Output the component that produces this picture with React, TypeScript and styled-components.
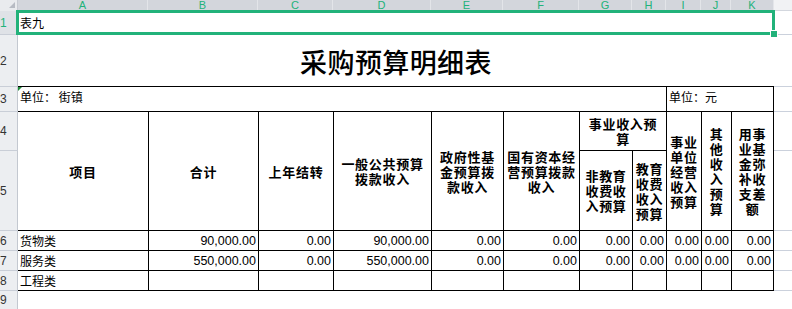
import React from "react";
import styled, { createGlobalStyle } from "styled-components";

const GREEN = "#22b27a";
const CJK = `"Noto Sans CJK SC", "Noto Sans", sans-serif`;
const LATIN = `"Liberation Sans", Arial, sans-serif`;

const GlobalStyle = createGlobalStyle`
  html, body { margin: 0; padding: 0; background: #fff; }
  body { font-family: ${CJK}; color: #000; }
`;

const Sheet = styled.div`
  position: relative;
  width: 792px;
  height: 309px;
  overflow: hidden;
  background: #fff;
  display: grid;
  grid-template-columns: 18px 130px 110px 75px 98px 72px 76px 53px 34px 35px 30px 43px 1fr;
  grid-template-rows: 11px 23px 52px 25px 39px 80px 20px 20px 20px 1fr;
`;

const Corner = styled.div`
  grid-column: 1;
  grid-row: 1;
  background: #e9ebee;
  border-right: 1px solid #c6cad1;
  box-sizing: border-box;
  display: flex;
  align-items: flex-end;
  justify-content: flex-end;
  padding: 0 2px 3px 0;
`;

const CornerMark = styled.span`
  width: 0;
  height: 0;
  border-left: 6px solid transparent;
  border-bottom: 6px solid #b7bbc3;
`;

const ColHeader = styled.div<{ $col: number }>`
  grid-column: ${(p) => p.$col};
  grid-row: 1;
  background: #d3d6dc;
  border-right: 1px solid #e3e5e9;
  box-sizing: border-box;
  display: flex;
  justify-content: center;
  align-items: flex-start;
  font-family: ${LATIN};
  font-size: 11px;
  line-height: 10px;
  color: ${GREEN};
`;

const ColHeaderRest = styled.div`
  grid-column: 13;
  grid-row: 1;
  background: #f1f2f4;
  border-bottom: 1px solid #d3d7de;
  box-sizing: border-box;
`;

const RowHeader = styled.div<{ $row: number; $sel?: boolean }>`
  grid-column: 1;
  grid-row: ${(p) => p.$row};
  background: ${(p) => (p.$sel ? "#dfe2e7" : "#eceef1")};
  border-right: 1px solid #c3c8d0;
  border-top: ${(p) => (p.$sel ? "none" : "1px solid #c9ced7")};
  box-sizing: border-box;
  overflow: hidden;
  display: flex;
  align-items: center;
  font-family: ${LATIN};
  font-size: 12px;
  color: ${(p) => (p.$sel ? GREEN : "#333")};
`;

const GridRest = styled.div<{ $row: number; $first?: boolean }>`
  grid-column: 13;
  grid-row: ${(p) => p.$row};
  border-top: ${(p) => (p.$first ? "none" : "1px solid #cbd1dc")};
  box-sizing: border-box;
`;

const Note = styled.div`
  grid-column: 2 / 13;
  grid-row: 2;
  display: flex;
  align-items: center;
  padding-left: 2px;
  font-size: 12px;
`;

const Title = styled.div`
  grid-column: 2 / 13;
  grid-row: 3;
  display: flex;
  align-items: center;
  justify-content: center;
  padding-top: 3px;
  box-sizing: border-box;
  font-size: 27px;
  font-weight: 500;
  letter-spacing: 0.4px;
`;

type CellProps = {
  $col: string;
  $row: string;
  $l?: boolean;
  $r?: boolean;
};

const TableCell = styled.div<CellProps>`
  grid-column: ${(p) => p.$col};
  grid-row: ${(p) => p.$row};
  box-sizing: border-box;
  border-top: 1px solid #000;
  border-left: ${(p) => (p.$l ? "1px solid #000" : "none")};
  border-right: ${(p) => (p.$r ? "1px solid #000" : "none")};
  min-width: 0;
  overflow: hidden;
  display: flex;
`;

const UnitCell = styled(TableCell)<{ $mark?: boolean }>`
  position: relative;
  align-items: flex-start;
  padding: 2px 0 0 2px;
  font-size: 12px;
  line-height: 16px;
  white-space: pre;
  &::before {
    content: "";
    display: ${(p) => (p.$mark ? "block" : "none")};
    position: absolute;
    top: 0;
    left: 0;
    border-top: 4px solid #1e8c3a;
    border-right: 4px solid transparent;
  }
`;

const HeadCell = styled(TableCell)`
  align-items: center;
  justify-content: center;
  text-align: center;
  white-space: pre;
  font-size: 13px;
  font-weight: 700;
  line-height: 15px;
  letter-spacing: 0.7px;
`;

const LabelCell = styled(TableCell)`
  align-items: center;
  padding-left: 2px;
  font-size: 12px;
`;

const NumCell = styled(TableCell)`
  align-items: center;
  justify-content: flex-end;
  padding-right: 2px;
  font-family: ${LATIN};
  font-size: 12.5px;
`;

const TableEnd = styled.div`
  grid-column: 2 / 13;
  grid-row: 10;
  border-top: 1px solid #000;
`;

const Selection = styled.div`
  position: absolute;
  left: 16px;
  top: 10px;
  width: 759px;
  height: 25px;
  box-sizing: border-box;
  border: 3px solid ${GREEN};
  pointer-events: none;
  &::after {
    content: "";
    position: absolute;
    right: -5px;
    bottom: -5px;
    width: 6px;
    height: 6px;
    background: ${GREEN};
    box-shadow: 0 0 0 1px #fff;
  }
`;

const letters = ["A", "B", "C", "D", "E", "F", "G", "H", "I", "J", "K"];
const sheetRows = [1, 2, 3, 4, 5, 6, 7, 8, 9];

const heads: { col: string; row: string; text: string; r?: boolean }[] = [
  { col: "3", row: "5 / 7", text: "合计" },
  { col: "4", row: "5 / 7", text: "上年结转" },
  { col: "5", row: "5 / 7", text: "一般公共预算\n拨款收入" },
  { col: "6", row: "5 / 7", text: "政府性基\n金预算拨\n款收入" },
  { col: "7", row: "5 / 7", text: "国有资本经\n营预算拨款\n收入" },
  { col: "8 / 10", row: "5", text: "事业收入预\n算" },
  { col: "8", row: "6", text: "非教育\n收费收\n入预算" },
  { col: "9", row: "6", text: "教育\n收费\n收入\n预算" },
  { col: "10", row: "5 / 7", text: "事业\n单位\n经营\n收入\n预算" },
  { col: "11", row: "5 / 7", text: "其\n他\n收\n入\n预\n算" },
  { col: "12", row: "5 / 7", text: "用事\n业基\n金弥\n补收\n支差\n额", r: true },
];

const zeros = Array(7).fill("0.00");
const dataRows = [
  { label: "货物类", values: ["90,000.00", "0.00", "90,000.00", ...zeros] },
  { label: "服务类", values: ["550,000.00", "0.00", "550,000.00", ...zeros] },
  { label: "工程类", values: Array(10).fill("") },
];

export default function App() {
  return (
    <>
      <GlobalStyle />
      <Sheet>
        <Corner>
          <CornerMark />
        </Corner>
        {letters.map((l, i) => (
          <ColHeader key={l} $col={i + 2}>
            {l}
          </ColHeader>
        ))}
        <ColHeaderRest />
        {sheetRows.map((n) => (
          <RowHeader key={n} $row={n + 1} $sel={n === 1}>
            {n}
          </RowHeader>
        ))}
        {sheetRows.map((n) => (
          <GridRest key={n} $row={n + 1} $first={n === 1} />
        ))}

        <Note>表九</Note>
        <Title>采购预算明细表</Title>

        <UnitCell $col="2 / 10" $row="4" $mark>
          单位： 街镇
        </UnitCell>
        <UnitCell $col="10 / 13" $row="4" $l $r>
          单位：元
        </UnitCell>

        <HeadCell $col="2" $row="5 / 7">
          项目
        </HeadCell>
        {heads.map((h) => (
          <HeadCell key={h.col + h.row} $col={h.col} $row={h.row} $l $r={h.r}>
            {h.text}
          </HeadCell>
        ))}

        {dataRows.map((row, ri) => (
          <React.Fragment key={row.label}>
            <LabelCell $col="2" $row={String(ri + 7)}>
              {row.label}
            </LabelCell>
            {row.values.map((v, ci) => (
              <NumCell
                key={ci}
                $col={String(ci + 3)}
                $row={String(ri + 7)}
                $l
                $r={ci === 9}
              >
                {v}
              </NumCell>
            ))}
          </React.Fragment>
        ))}
        <TableEnd />

        <Selection />
      </Sheet>
    </>
  );
}
